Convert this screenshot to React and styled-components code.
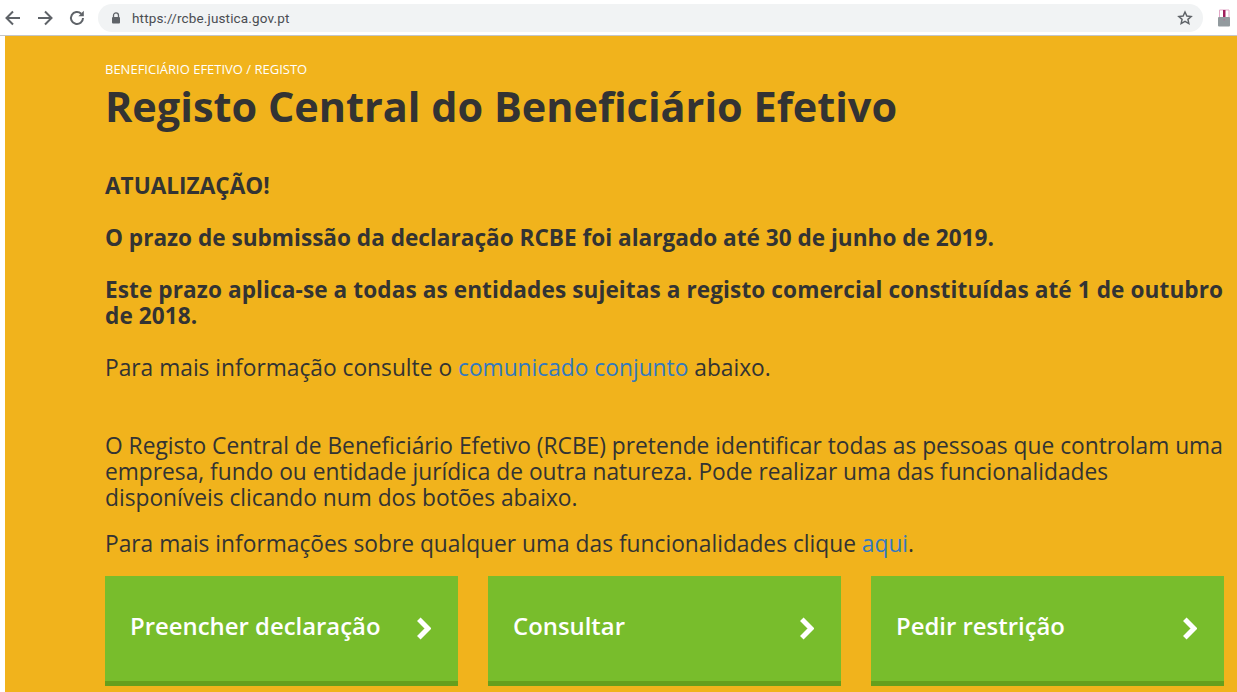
import React from "react";
import styled, { createGlobalStyle } from "styled-components";

const Global = createGlobalStyle`
  html, body { margin: 0; padding: 0; height: 692px; overflow: hidden; background: #fff; }
  body { font-family: "Open Sans", "Liberation Sans", sans-serif; }
`;
const Toolbar = styled.header`
  height: 35px; display: flex; align-items: center; background: #fff;
  border-bottom: 1px solid #c4c6c8; box-sizing: content-box; padding-left: 4px;
`;
const NavIcon = styled.svg`
  width: 18px; height: 18px; flex: none; margin-right: ${p => p.$gap}px;
  fill: none; stroke: #5f6368; stroke-width: 2;
`;
const Omnibox = styled.div`
  margin-left: 12px; width: 1105px; height: 28px; border-radius: 14px; background: #f1f3f4;
  display: flex; align-items: center; padding: 0 10px 0 13px; box-sizing: border-box;
`;
const Url = styled.span`
  font: 13.5px "Roboto", "Liberation Sans", sans-serif; color: #4a4d52; margin-left: 11px; flex: 1; letter-spacing: .15px;
`;
const Extension = styled.svg`
  width: 14px; height: 18px; margin-left: 14px; flex: none;
`;
const Main = styled.main`
  margin-left: 5px; height: 656px; background: #f1b31c; overflow: hidden;
  padding: 26px 13px 0 100px; box-sizing: border-box;
`;
const Crumb = styled.div`
  font-size: 13px; line-height: 14px; color: #fff;
`;
const Title = styled.h1`
  margin: 0; font-size: 41.45px; line-height: 60px; font-weight: 700; color: #333;
`;
const Body = styled.div`
  margin-top: 37px; line-height: 26px; color: #333;
`;
const Para = styled.p`
  margin: 0 0 ${p => p.$after ?? 26}px; font-weight: ${p => p.$bold ? 700 : 400};
  font-size: ${p => p.$bold ? 22.6 : 22.75}px; letter-spacing: ${p => p.$track ?? 0}px;
`;
const Link = styled.a`color: #3379bf; text-decoration: none;`;
const Buttons = styled.div`
  display: grid; grid-template-columns: repeat(3, 353px); column-gap: 30px; margin-top: 19px;
`;
const Action = styled.a`
  height: 110px; box-sizing: border-box; background: #78bd2c; border-bottom: 5px solid #669f1c;
  padding: 0 27px 0 25px; display: flex; align-items: center; justify-content: space-between;
  color: #fff; font-size: 23.9px; font-weight: 600;
`;
const Label = styled.span`
  margin-top: -6px;
`;
const Chevron = styled.svg`
  width: 14px; height: 23px; fill: none; stroke: #fff; stroke-width: 5;
`;

const Arrow = ({ dir }) => (
  <NavIcon viewBox="0 0 18 18" $gap={14}>
    {dir === "back" ? <path d="M16 9H3M9 2.5 2.5 9 9 15.5" /> : <path d="M2 9h13M9 2.5 15.5 9 9 15.5" />}
  </NavIcon>
);
const ActionButton = ({ children }) => (
  <Action><Label>{children}</Label><Chevron viewBox="0 0 14 23"><path d="M1.8 2.2 11 11.5 1.8 20.8" /></Chevron></Action>
);

export default function App() {
  return (
    <>
      <Global />
      <Toolbar>
        <Arrow dir="back" />
        <Arrow dir="forward" />
        <NavIcon viewBox="0 0 18 18" $gap={0}>
          <path d="M15 9a6 6 0 1 1-1.8-4.3" />
          <path d="M15.8 1.8v5.4h-5.4z" fill="#5f6368" stroke="none" />
        </NavIcon>
        <Omnibox>
          <svg width="10" height="12" viewBox="0 0 10 12">
            <path d="M2.5 5V3.4a2.5 2.5 0 0 1 5 0V5" fill="none" stroke="#5f6368" strokeWidth="1.3" />
            <rect x="1" y="5" width="8" height="6.5" rx="1" fill="#5f6368" />
          </svg>
          <Url>https://rcbe.justica.gov.pt</Url>
          <svg width="16" height="16" viewBox="0 0 24 24" fill="none" stroke="#5f6368" strokeWidth="2.2">
            <path d="M12 3l2.8 6 6.4.7-4.8 4.3 1.4 6.5L12 17.2 6.2 20.5l1.4-6.5L2.8 9.7 9.2 9z" />
          </svg>
        </Omnibox>
        <Extension viewBox="0 0 14 18">
          <path d="M2.5 1h9.5v8H2.5z" fill="#fff" stroke="#e3a9c8" strokeWidth="1" />
          <path d="M6 1h2.5v7H6z" fill="#a01e5c" />
          <rect x="1" y="8" width="12" height="9.5" rx="1" fill="#929a9e" />
          <rect x="6.5" y="10" width="1.5" height="1.5" fill="#a87a96" />
        </Extension>
      </Toolbar>
      <Main>
        <Crumb>BENEFICIÁRIO EFETIVO / REGISTO</Crumb>
        <Title>Registo Central do Beneficiário Efetivo</Title>
        <Body>
          <Para $bold>ATUALIZAÇÃO!</Para>
          <Para $bold>O prazo de submissão da declaração RCBE foi alargado até 30 de junho de 2019.</Para>
          <Para $bold $track={0.09}>Este prazo aplica-se a todas as entidades sujeitas a registo comercial constituídas até 1 de outubro de 2018.</Para>
          <Para $after={52}>Para mais informação consulte o <Link>comunicado conjunto</Link> abaixo.</Para>
          <Para $after={20}>O Registo Central de Beneficiário Efetivo (RCBE) pretende identificar todas as pessoas que controlam uma empresa, fundo ou entidade jurídica de outra natureza. Pode realizar uma das funcionalidades disponíveis clicando num dos botões abaixo.</Para>
          <Para $after={0}>Para mais informações sobre qualquer uma das funcionalidades clique <Link>aqui</Link>.</Para>
        </Body>
        <Buttons>
          <ActionButton>Preencher declaração</ActionButton>
          <ActionButton>Consultar</ActionButton>
          <ActionButton>Pedir restrição</ActionButton>
        </Buttons>
      </Main>
    </>
  );
}
